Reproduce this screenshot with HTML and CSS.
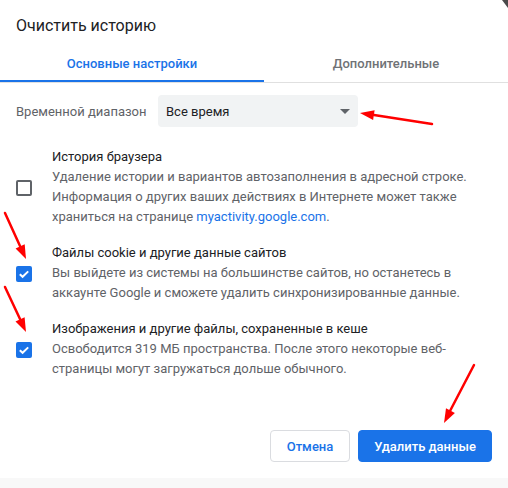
FILE: index.html
```html
<!DOCTYPE html>
<html lang="ru">
<head>
    <meta charset="UTF-8">
    <meta name="viewport" content="width=device-width, initial-scale=1.0">
    <title>Очистить историю</title>
    <link rel="stylesheet" href="styles.css">
</head>
<body>
    <div class="dialog">
        <div class="dialog-title">Очистить историю</div>

        <div class="tabs">
            <div class="tab tab-active">Основные настройки</div>
            <div class="tab">Дополнительные</div>
        </div>

        <div class="range-row">
            <span class="range-label">Временной диапазон</span>
            <div class="select">
                <span>Все время</span>
                <span class="select-arrow"></span>
            </div>
        </div>

        <div class="items">
            <div class="item">
                <div class="checkbox"></div>
                <div class="item-text">
                    <div class="item-title">История браузера</div>
                    <div class="item-desc">Удаление истории и вариантов автозаполнения в адресной строке.<br>Информация о других ваших действиях в Интернете может также<br>храниться на странице <a class="link" href="#">myactivity.google.com</a>.</div>
                </div>
            </div>

            <div class="item">
                <div class="checkbox checked">
                    <svg width="16" height="16" viewBox="0 0 16 16"><path d="M3.8 8.2l2.8 2.6 5.6-5.4" fill="none" stroke="#fff" stroke-width="2"/></svg>
                </div>
                <div class="item-text">
                    <div class="item-title">Файлы cookie и другие данные сайтов</div>
                    <div class="item-desc">Вы выйдете из системы на большинстве сайтов, но останетесь в<br>аккаунте Google и сможете удалить синхронизированные данные.</div>
                </div>
            </div>

            <div class="item">
                <div class="checkbox checked">
                    <svg width="16" height="16" viewBox="0 0 16 16"><path d="M3.8 8.2l2.8 2.6 5.6-5.4" fill="none" stroke="#fff" stroke-width="2"/></svg>
                </div>
                <div class="item-text">
                    <div class="item-title">Изображения и другие файлы, сохраненные в кеше</div>
                    <div class="item-desc">Освободится 319 МБ пространства. После этого некоторые веб-<br>страницы могут загружаться дольше обычного.</div>
                </div>
            </div>
        </div>

        <div class="actions">
            <button class="btn btn-cancel">Отмена</button>
            <button class="btn btn-primary">Удалить данные</button>
        </div>
    </div>
    <div class="footer-strip"></div>

    <!-- annotation arrows drawn over the dialog -->
    <svg class="arrows" width="508" height="488" viewBox="0 0 508 488">
        <polygon points="502,0 508,0 508,8" fill="#4a4a4a"/>
        <g stroke="#f00" stroke-width="2.5" stroke-linecap="round">
            <line x1="432" y1="124" x2="374" y2="115"/>
            <line x1="5" y1="213" x2="20" y2="246"/>
            <line x1="5" y1="287" x2="20" y2="319"/>
            <line x1="474" y1="365" x2="450" y2="411"/>
        </g>
        <g fill="#f00">
            <polygon points="360,113 374.6,110.2 373.1,120.1"/>
            <polygon points="26,259 15.6,248.4 24.7,244.2"/>
            <polygon points="26,332 15.5,321.4 24.6,317.2"/>
            <polygon points="444,423 446,408.3 454.9,412.9"/>
        </g>
    </svg>
</body>
</html>
```

FILE: styles.css
```css
body {
    margin: 0;
    font-family: Roboto, "Noto Sans", Arial, sans-serif;
    background: #fff;
    color: #202124;
    width: 508px;
    height: 488px;
    overflow: hidden;
    position: relative;
}
.dialog {
    height: 478px;
    display: flex;
    flex-direction: column;
}
.dialog-title {
    padding: 16px 16px 0;
    font-size: 16px;
    line-height: 20px;
    color: #202124;
    height: 28px;
}
.tabs {
    display: flex;
    height: 38px;
    border-bottom: 1px solid #e0e0e0;
}
.tab {
    display: flex;
    align-items: center;
    justify-content: center;
    font-size: 13px;
    font-weight: 500;
    color: #6f7276;
    flex: 1;
}
.tab-active {
    flex: 0 0 264px;
    color: #1a73e8;
    box-shadow: inset 0 -2px 0 #1a73e8;
}
.range-row {
    display: flex;
    align-items: center;
    margin-top: 12px;
    padding-left: 16px;
}
.range-label {
    width: 142px;
    font-size: 13px;
    color: #5f6368;
}
.select {
    width: 200px;
    height: 32px;
    box-sizing: border-box;
    background: #f1f3f4;
    border-radius: 4px;
    padding: 0 7px 0 8px;
    display: flex;
    align-items: center;
    justify-content: space-between;
    font-size: 13px;
    color: #202124;
}
.select-arrow {
    width: 0;
    height: 0;
    border-left: 5px solid transparent;
    border-right: 5px solid transparent;
    border-top: 5px solid #5f6368;
    margin-right: 1px;
}
.items {
    display: flex;
    flex-direction: column;
    gap: 16px;
    margin-top: 20px;
    padding: 0 16px;
}
.item {
    display: flex;
    align-items: center;
    gap: 20px;
}
.checkbox {
    width: 16px;
    height: 16px;
    box-sizing: border-box;
    border: 2px solid #5f6368;
    border-radius: 2px;
    flex: none;
    margin-top: 1px;
}
.checkbox.checked {
    border: none;
    background: #1a73e8;
}
.checkbox svg {
    display: block;
}
.item-text {
    font-size: 13px;
    line-height: 20px;
    white-space: nowrap;
}
.item-title {
    color: #202124;
}
.item-desc {
    color: #5f6368;
}
.link {
    color: #1a73e8;
    text-decoration: none;
}
.actions {
    margin-top: auto;
    display: flex;
    justify-content: flex-end;
    gap: 8px;
    padding: 0 16px 16px;
}
.btn {
    height: 32px;
    padding: 0;
    border-radius: 4px;
    font-family: inherit;
    font-size: 13px;
    font-weight: 500;
    white-space: nowrap;
}
.btn-cancel {
    background: #fff;
    border: 1px solid #dadce0;
    color: #1a73e8;
    width: 80px;
}
.btn-primary {
    background: #1a73e8;
    border: 1px solid #1a73e8;
    color: #fff;
    width: 134px;
}
.footer-strip {
    height: 10px;
    background: #f8f8f8;
}
.arrows {
    position: absolute;
    left: 0;
    top: 0;
    pointer-events: none;
}
```
